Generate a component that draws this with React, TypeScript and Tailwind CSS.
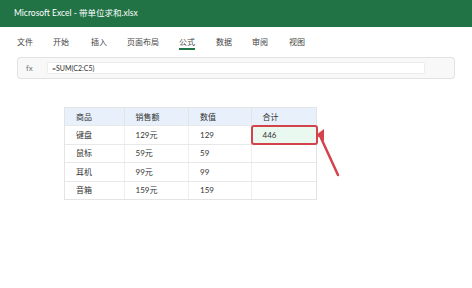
const FONT = "font-['Lato','Noto_Sans_CJK_SC',sans-serif]";

const tabs: { label: string; w: string; active?: boolean }[] = [
  { label: "文件", w: "w-[36px]" },
  { label: "开始", w: "w-[38px]" },
  { label: "插入", w: "w-[36px]" },
  { label: "页面布局", w: "w-[52px]" },
  { label: "公式", w: "w-[37px]", active: true },
  { label: "数据", w: "w-[36px]" },
  { label: "审阅", w: "w-[37px]" },
  { label: "视图", w: "w-[36px]" },
];

const rows = [
  ["键盘", "129元", "129", "446"],
  ["鼠标", "59元", "59", ""],
  ["耳机", "99元", "99", ""],
  ["音箱", "159元", "159", ""],
];

const cols = ["w-[60px]", "w-[65px]", "w-[63px]", "w-[65px]"];

export default function App() {
  return (
    <div
      className={`relative w-[472px] h-[288px] overflow-hidden bg-white text-[#333] ${FONT}`}
    >
      <div className="h-[27px] bg-[#217346] flex items-center pl-[14px] text-white text-[8.5px]">
        Microsoft Excel - 带单位求和.xlsx
      </div>

      <div className="h-[30px] flex items-start pl-[17px] pt-[9px] text-[8px] text-[#444]">
        {tabs.map((t) => (
          <div key={t.label} className={t.w}>
            <span
              className={`inline-block leading-[11px] border-b-2 ${
                t.active ? "border-[#217346]" : "border-transparent"
              }`}
            >
              {t.label}
            </span>
          </div>
        ))}
      </div>

      <div className="mx-[17px] h-[22px] border border-[#e3e3e3] rounded-[3px] bg-[#f8f8f8] flex items-center">
        <span className="w-[29px] pl-[8px] text-[8px] text-[#777]">fx</span>
        <div className="w-[378px] h-[12px] bg-white border border-[#ececec] rounded-[2px] flex items-center pl-[4px] text-[7px] text-[#333]">
          =SUM(C2:C5)
        </div>
      </div>

      <div className="mt-[28px] ml-[64px] w-[253px] border border-[#e4e4e4] text-[8px]">
        <div className="flex h-[17px] bg-[#e8f1fb]">
          {["商品", "销售额", "数值", "合计"].map((h, i) => (
            <div
              key={h}
              className={`${cols[i]} flex items-center pl-[11px] ${
                i < 3 ? "border-r border-[#e4e4e4]" : ""
              }`}
            >
              {h}
            </div>
          ))}
        </div>
        {rows.map((r) => (
          <div key={r[0]} className="flex h-[18.5px] border-t border-[#e8e8e8]">
            {r.map((c, i) => (
              <div
                key={i}
                className={`${cols[i]} relative flex items-center pl-[11px] ${
                  i < 3 ? "border-r border-[#eeeeee]" : ""
                }`}
              >
                {c === "446" && (
                  <div className="absolute -top-[1.5px] -bottom-[1.5px] -left-[1px] -right-[2px] border-2 border-[#d4434c] rounded-[3px] bg-[#eaf9ef]" />
                )}
                <span className="relative">{c}</span>
              </div>
            ))}
          </div>
        ))}
      </div>

      <svg
        className="absolute inset-0 pointer-events-none"
        width="472"
        height="288"
        viewBox="0 0 472 288"
      >
        <line
          x1="321"
          y1="138"
          x2="338"
          y2="175"
          stroke="#d4434c"
          strokeWidth="2.5"
          strokeLinecap="round"
        />
        <polygon points="316,135 324,129 324,141" fill="#d4434c" />
      </svg>
    </div>
  );
}
